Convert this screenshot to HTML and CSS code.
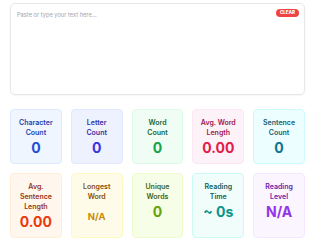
FILE: index.html
```html
<!DOCTYPE html>
<html lang="en">
<head>
  <meta charset="UTF-8" />
  <title>Text Analyzer</title>
  <meta name="viewport" content="width=device-width, initial-scale=1.0" />
  <link rel="stylesheet" href="styles.css">
</head>
<body>
  <main class="analyzer">
    <div class="input-box">
      <textarea class="text-input" placeholder="Paste or type your text here..."></textarea>
      <button class="clear-btn" type="button">CLEAR</button>
    </div>

    <section class="stats">
      <div class="stat blue">
        <span class="stat-label">Character Count</span>
        <span class="stat-value">0</span>
      </div>
      <div class="stat indigo">
        <span class="stat-label">Letter Count</span>
        <span class="stat-value">0</span>
      </div>
      <div class="stat green">
        <span class="stat-label">Word Count</span>
        <span class="stat-value">0</span>
      </div>
      <div class="stat rose">
        <span class="stat-label">Avg. Word Length</span>
        <span class="stat-value">0.00</span>
      </div>
      <div class="stat cyan">
        <span class="stat-label">Sentence Count</span>
        <span class="stat-value">0</span>
      </div>

      <div class="stat orange">
        <span class="stat-label">Avg. Sentence Length</span>
        <span class="stat-value">0.00</span>
      </div>
      <div class="stat yellow">
        <span class="stat-label">Longest Word</span>
        <span class="stat-value small">N/A</span>
      </div>
      <div class="stat lime">
        <span class="stat-label">Unique Words</span>
        <span class="stat-value">0</span>
      </div>
      <div class="stat teal">
        <span class="stat-label">Reading Time</span>
        <span class="stat-value">~ 0s</span>
      </div>
      <div class="stat purple">
        <span class="stat-label">Reading Level</span>
        <span class="stat-value">N/A</span>
      </div>
    </section>
  </main>
</body>
</html>
```

FILE: styles.css
```css
* {
  box-sizing: border-box;
}

body {
  margin: 0;
  font-family: Inter, "Noto Sans", sans-serif;
  background: #ffffff;
  color: #222;
}

.analyzer {
  padding: 3px 10px 10px;
}

.input-box {
  position: relative;
  height: 92px;
  border: 1px solid #e5e7eb;
  border-radius: 5px;
  box-shadow: 0 1px 2px rgba(0, 0, 0, 0.04);
}

.text-input {
  display: block;
  width: 100%;
  height: 100%;
  border: none;
  resize: none;
  background: transparent;
  padding: 8px 6px;
  font-family: inherit;
  font-size: 5.6px;
  letter-spacing: 0.05px;
  color: #333;
  outline: none;
}

.text-input::placeholder {
  color: #9ca3af;
}

.clear-btn {
  position: absolute;
  top: 5px;
  right: 5px;
  height: 8px;
  padding: 0 4px;
  border: none;
  border-radius: 8px;
  background: #ef4444;
  color: white;
  font-family: inherit;
  font-size: 4.5px;
  font-weight: 800;
  line-height: 8px;
}

.stats {
  margin-top: 14px;
  display: grid;
  grid-template-columns: repeat(5, 1fr);
  gap: 9px;
}

.stat {
  display: flex;
  flex-direction: column;
  align-items: center;
  text-align: center;
  padding: 8px 3px 7px;
  border: 1px solid;
  border-radius: 4px;
}

.stat-label {
  font-size: 7px;
  font-weight: 600;
  line-height: 10px;
  max-width: 40px;
}

.stat-value {
  margin-top: 2px;
  font-size: 14px;
  font-weight: 700;
  line-height: 16px;
}

.stat-value.small {
  font-size: 9.5px;
  margin-top: 9px;
  line-height: 12px;
}

.blue { background: #eff6ff; border-color: #dbeafe; color: #1e40af; }
.blue .stat-value { color: #1d4ed8; }

.indigo { background: #eef2ff; border-color: #e0e7ff; color: #3730a3; }
.indigo .stat-value { color: #3b32e0; }

.green { background: #f0fdf4; border-color: #dcfce7; color: #166534; }
.green .stat-value { color: #16a34a; }

.rose { background: #fdf2f8; border-color: #fce7f3; color: #9d174d; }
.rose .stat-value { color: #e11d48; }

.cyan { background: #ecfeff; border-color: #cffafe; color: #155e75; }
.cyan .stat-value { color: #0e7490; }

.orange { background: #fff7ed; border-color: #ffedd5; color: #9a3412; }
.orange .stat-value { color: #ea3a0c; }

.yellow { background: #fefce8; border-color: #fef9c3; color: #854d0e; }
.yellow .stat-value { color: #ca8a04; }

.lime { background: #f7fee7; border-color: #ecfccb; color: #3f6212; }
.lime .stat-value { color: #65a30d; }

.teal { background: #f0fdfa; border-color: #ccfbf1; color: #115e59; }
.teal .stat-value { color: #0d9488; }

.purple { background: #faf5ff; border-color: #f3e8ff; color: #6b21a8; }
.purple .stat-value { color: #9333ea; }
```
